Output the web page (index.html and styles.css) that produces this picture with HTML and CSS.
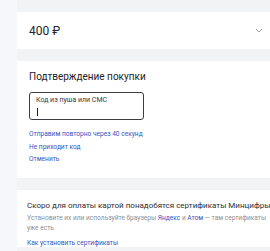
FILE: index.html
```html
<!DOCTYPE html>
<html lang="ru">
<head>
    <meta charset="UTF-8">
    <meta name="viewport" content="width=device-width, initial-scale=1.0">
    <title>Оплата</title>
    <link rel="stylesheet" href="styles.css">
</head>
<body>
    <div class="page">
        <div class="side"></div>
        <div class="main">
            <div class="card amount">
                <span>400 ₽</span>
                <svg class="chevron" width="8" height="5" viewBox="0 0 8 5"><path d="M1 1l3 3 3-3" fill="none" stroke="#9aa0a8" stroke-width="1"/></svg>
            </div>

            <div class="card confirm">
                <h2>Подтверждение покупки</h2>
                <div class="field">
                    <div class="label">Код из пуша или СМС</div>
                    <div class="caret"></div>
                </div>
                <div class="links">
                    <a href="#">Отправим повторно через 40 секунд</a>
                    <a href="#">Не приходит код</a>
                    <a href="#">Отменить</a>
                </div>
            </div>

            <div class="card notice">
                <p class="head">Скоро для оплаты картой понадобятся сертификаты Минцифры</p>
                <p class="sub">Установите их или используйте браузеры <a href="#">Яндекс</a> и <a href="#">Атом</a> — там сертификаты уже есть</p>
                <a href="#" class="how">Как установить сертификаты</a>
            </div>
        </div>
    </div>
</body>
</html>
```

FILE: styles.css
```css
body {
    margin: 0;
    background: #f2f3f5;
    font-family: Roboto, "Noto Sans", sans-serif;
    color: #1f2329;
    overflow: hidden;
}
.page {
    display: flex;
    height: 251px;
}
.side {
    width: 17px;
    flex-shrink: 0;
    background: #f5f7fb;
}
.main {
    flex: 1;
    padding-top: 12px;
    display: flex;
    flex-direction: column;
    gap: 12px;
    overflow: hidden;
}
.card {
    background: white;
    width: 268px;
    box-sizing: border-box;
    padding: 0 10px;
    flex-shrink: 0;
}
.amount {
    height: 37px;
    display: flex;
    align-items: center;
    justify-content: space-between;
    font-size: 12px;
    padding-left: 12px;
    padding-right: 16px;
}
.chevron {
    margin-right: 6px;
}
.confirm {
    height: 117px;
    padding-top: 10px;
    padding-left: 12px;
}
.confirm h2 {
    margin: 0;
    font-size: 10px;
    font-weight: 400;
    line-height: 12px;
}
.field {
    width: 115px;
    height: 28px;
    box-sizing: border-box;
    border: 1px solid #3b3f45;
    border-radius: 3px;
    margin-top: 9px;
    padding: 3px 6px;
}
.label {
    font-size: 7px;
    line-height: 8px;
    color: #33373d;
}
.caret {
    width: 1px;
    height: 8px;
    background: #222;
    margin-top: 4px;
    margin-left: 1px;
}
.links {
    display: flex;
    flex-direction: column;
    gap: 4.5px;
    margin-top: 10px;
}
a {
    color: #3456c4;
    text-decoration: none;
}
.links a {
    font-size: 6.6px;
    line-height: 8px;
}
.notice {
    padding-top: 10px;
}
.notice p {
    margin: 0;
}
.head {
    font-size: 8px;
    line-height: 11px;
    color: #2a2e34;
}
.sub {
    font-size: 6.6px;
    line-height: 10px;
    color: #8b9098;
    margin-top: 2px !important;
}
.how {
    display: block;
    font-size: 6.6px;
    line-height: 8px;
    margin-top: 6px;
}
```
